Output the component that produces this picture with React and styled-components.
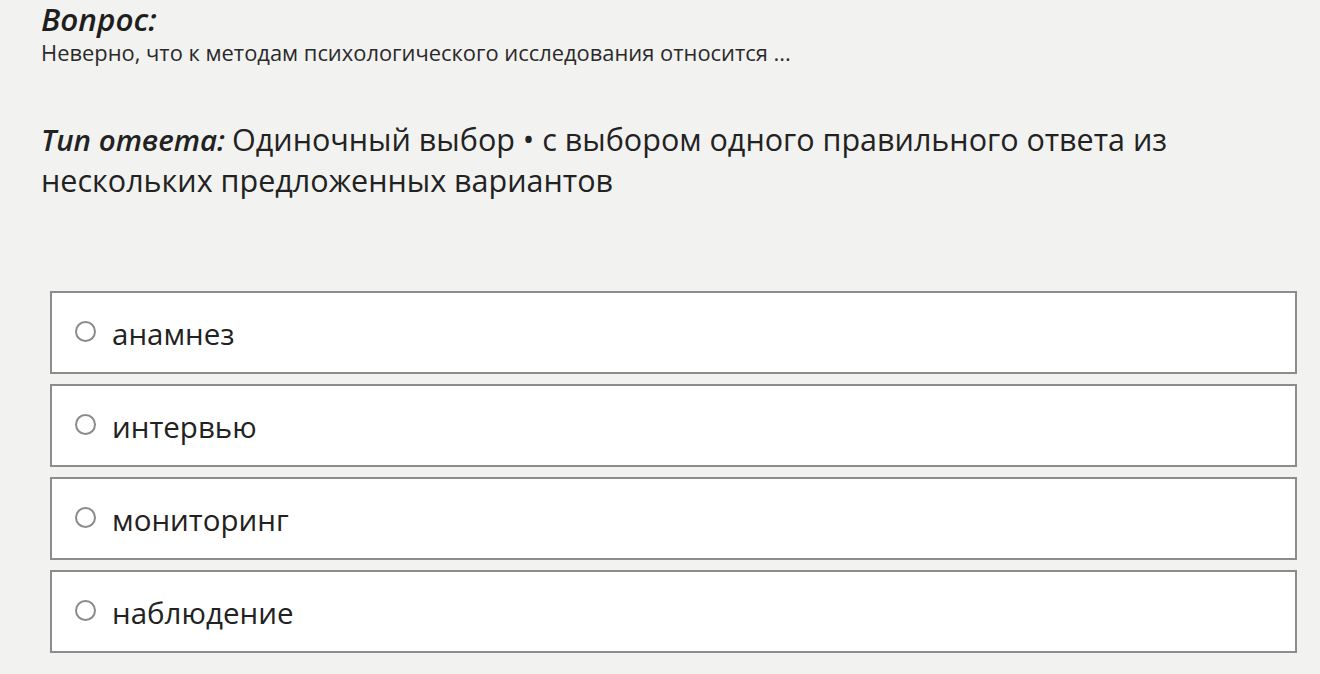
import React from "react";
import styled, { createGlobalStyle } from "styled-components";

const Global = createGlobalStyle`
  html, body { margin: 0; padding: 0; background: #f2f2f0; }
  body { font-family: "Open Sans", "Noto Sans", sans-serif; color: #222; }
`;

const Page = styled.div`
  padding: 0 23px 0 41px;
  display: flex;
  flex-direction: column;
`;

const Title = styled.div`
  font-size: 31.5px;
  font-weight: 600;
  font-style: italic;
  line-height: 38px;
  color: #1e1e1e;
`;

const Question = styled.div`
  font-size: 21.9px;
  line-height: 30px;
  color: #2a2a2a;
`;

const TypeLine = styled.div`
  margin-top: 51px;
  font-size: 30.5px;
  line-height: 40px;
  color: #222;
  max-width: 1180px;
`;

const TypeLabel = styled.span`
  display: inline-block;
  font-weight: 600;
  font-style: italic;
  font-size: 29.5px;
  margin-right: 7px;
`;

const Options = styled.div`
  margin-top: 91px;
  margin-left: 9px;
  display: flex;
  flex-direction: column;
  gap: 10px;
`;

const Option = styled.label`
  box-sizing: border-box;
  height: 83px;
  background: #fff;
  border: 2px solid #8c8c8c;
  display: flex;
  align-items: center;
  padding-left: 23px;
  gap: 16px;
  font-size: 29.5px;
  color: #222;
  cursor: pointer;
`;

const Radio = styled.span`
  box-sizing: border-box;
  width: 21px;
  height: 21px;
  border-radius: 50%;
  border: 2px solid #8a8a8a;
  background: #fff;
  flex: none;
  margin-top: -2px;
`;

const OptionText = styled.span`
  margin-top: 2px;
`;

const options = ["анамнез", "интервью", "мониторинг", "наблюдение"];

export default function App() {
  return (
    <>
      <Global />
      <Page>
        <Title>Вопрос:</Title>
        <Question>Неверно, что к методам психологического исследования относится ...</Question>
        <TypeLine>
          <TypeLabel>Тип ответа:</TypeLabel>Одиночный выбор • с выбором одного правильного ответа из нескольких предложенных вариантов
        </TypeLine>
        <Options>
          {options.map((o) => (
            <Option key={o}>
              <Radio />
              <OptionText>{o}</OptionText>
            </Option>
          ))}
        </Options>
      </Page>
    </>
  );
}
